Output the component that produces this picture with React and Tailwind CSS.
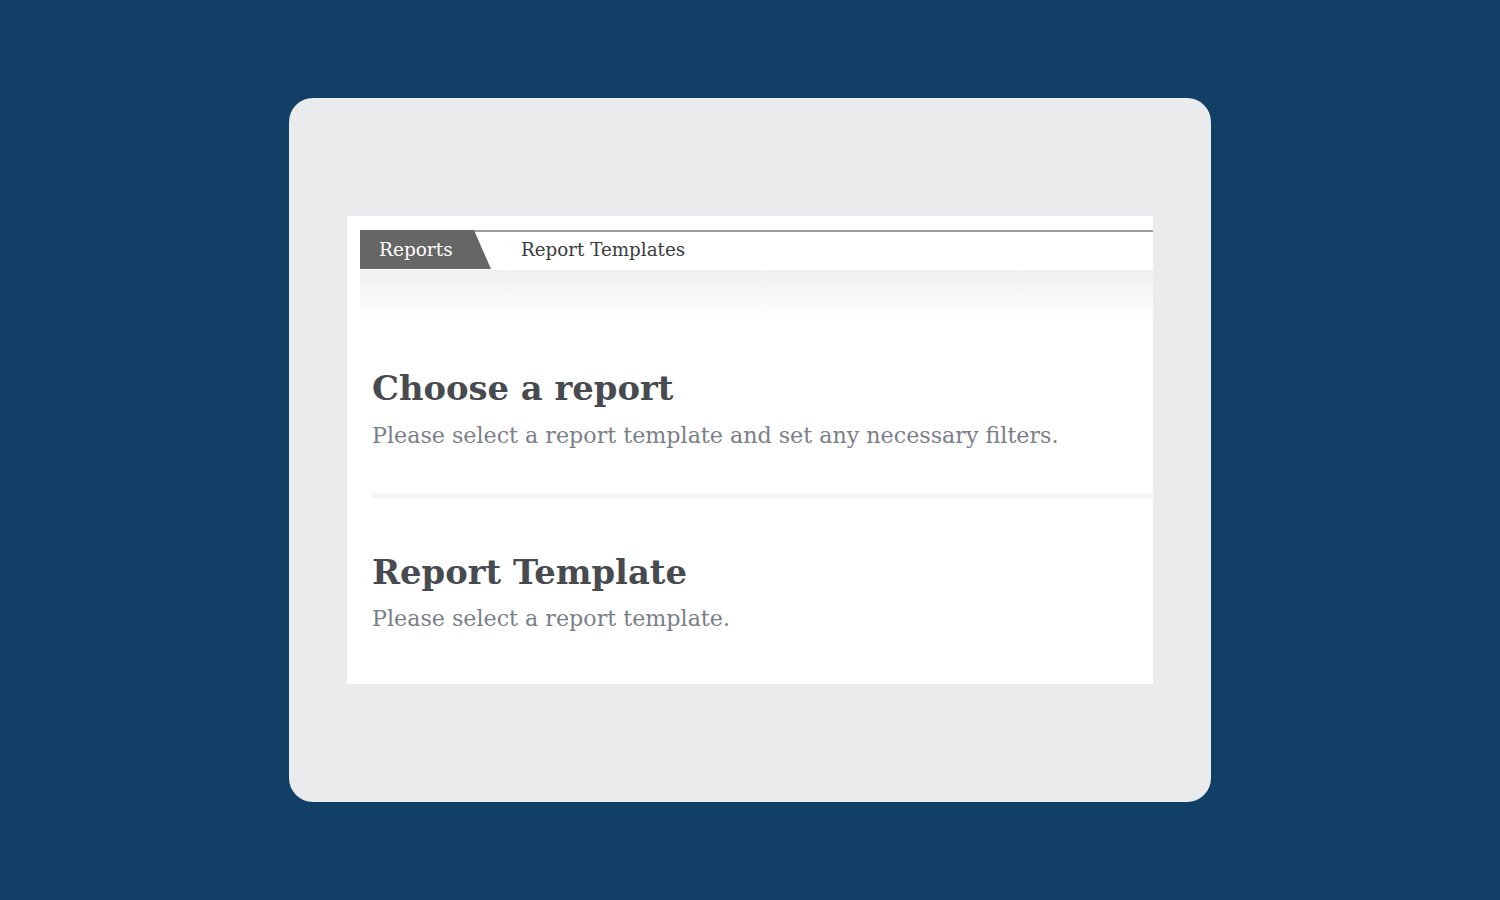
export default function App() {
  const serif = { fontFamily: '"DejaVu Serif", "Liberation Serif", serif' };
  return (
    <div className="w-[1500px] h-[900px] bg-[#113f66] flex items-start justify-center pt-[98px]" style={serif}>
      <div className="w-[922px] h-[704px] bg-[#e9ebed] rounded-[24px] pt-[118px] pl-[58px]">
        <div className="w-[806px] h-[468px] bg-white pt-[14px] pl-[13px]">
          <div className="relative">
            <div className="h-[40px] flex items-stretch border-t-2 border-[#9c9c9c] bg-white">
              <div className="relative w-[131px] h-[39px] -mt-[2px]">
                <div className="absolute inset-0 bg-[#666666] [clip-path:polygon(0_0,87%_0,100%_100%,0_100%)]" />
                <span className="relative block pl-[19px] pt-[8px] text-[18.5px] leading-[24px] text-white">Reports</span>
              </div>
              <span className="pl-[30px] pt-[6px] text-[18.3px] leading-[24px] text-[#3b3b3b]">Report Templates</span>
            </div>
            <div className="h-[50px] bg-gradient-to-b from-[#efefef] to-white" />
          </div>
          <div className="pl-[12px] pt-[46px]">
            <h1 className="text-[33.8px] leading-[44px] font-bold text-[#474b50]">Choose a report</h1>
            <p className="text-[22.2px] leading-[34px] text-[#7b8088] mt-[8px]">Please select a report template and set any necessary filters.</p>
          </div>
          <div className="ml-[11px] mt-[41px] h-[5px] bg-[#f5f5f5]" />
          <div className="pl-[12px] pt-[52px]">
            <h2 className="text-[33.8px] leading-[44px] font-bold text-[#474b50]">Report Template</h2>
            <p className="text-[22.2px] leading-[34px] text-[#7b8088] mt-[7px]">Please select a report template.</p>
          </div>
        </div>
      </div>
    </div>
  );
}
